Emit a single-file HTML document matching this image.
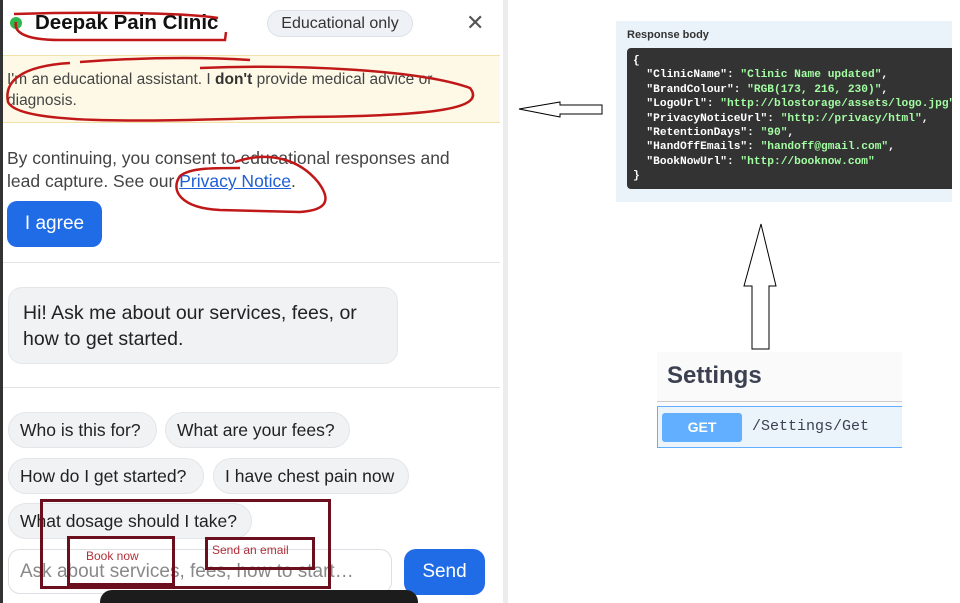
<!DOCTYPE html>
<html style="overflow:hidden;height:603px"><head><meta charset="utf-8"><style>
*{margin:0;padding:0;box-sizing:border-box}
body{width:960px;height:603px;background:#fff;font-family:"Liberation Sans",sans-serif;position:relative;overflow:hidden}
.a{position:absolute}
.chip{position:absolute;height:36px;border-radius:18px;background:#f1f2f4;border:1px solid #e3e5e8;font-size:17.5px;color:#222;line-height:34px;padding-left:11px;white-space:nowrap}
.code{font-family:"Liberation Mono",monospace;font-weight:bold;font-size:11.2px;line-height:14.4px;color:#fff;white-space:pre}
.g{color:#a2fca2}
</style></head><body>
<div class="a" style="left:0;top:0;width:3px;height:603px;background:#333"></div>
<div class="a" style="left:503px;top:0;width:5px;height:603px;background:#ececec"></div>
<div class="a" style="left:10px;top:17px;width:12px;height:12px;border-radius:6px;background:#2db84d"></div>
<div class="a" style="left:35px;top:11px;font-size:20.5px;font-weight:bold;color:#111">Deepak Pain Clinic</div>
<div class="a" style="left:267px;top:10px;width:146px;height:27px;border-radius:14px;background:#eef1f5;border:1px solid #dde2e8;font-size:16px;color:#333;text-align:center;line-height:25px">Educational only</div>
<div class="a" style="left:466px;top:10px;font-size:22px;color:#555">✕</div>
<div class="a" style="left:3px;top:55px;width:497px;height:68px;background:#fdf9e6;border-top:1px solid #f1e2a8;border-bottom:1px solid #f1e2a8"></div>
<div class="a" style="left:7px;top:69px;width:475px;font-size:15.5px;line-height:21px;color:#444">I'm an educational assistant. I <b style="color:#333">don't</b> provide medical advice or diagnosis.</div>
<div class="a" style="left:7px;top:147px;width:470px;font-size:17.5px;line-height:23px;color:#444">By continuing, you consent to educational responses and lead capture. See our <span style="color:#1d5fd6;text-decoration:underline">Privacy Notice</span>.</div>
<div class="a" style="left:7px;top:201px;width:95px;height:46px;border-radius:10px;background:#1f6ce6;color:#fff;font-size:19px;text-align:center;line-height:46px">I agree</div>
<div class="a" style="left:3px;top:262px;width:497px;height:1px;background:#e3e3e3"></div>
<div class="a" style="left:8px;top:287px;width:390px;height:77px;border-radius:14px;background:#f1f2f4;border:1px solid #e4e6e9;font-size:19.5px;line-height:26px;color:#222;padding:12px 14px">Hi! Ask me about our services, fees, or how to get started.</div>
<div class="a" style="left:3px;top:387px;width:497px;height:1px;background:#e3e3e3"></div>
<div class="chip" style="left:8px;top:412px;width:149px">Who is this for?</div>
<div class="chip" style="left:165px;top:412px;width:185px">What are your fees?</div>
<div class="chip" style="left:8px;top:458px;width:196px">How do I get started?</div>
<div class="chip" style="left:213px;top:458px;width:196px">I have chest pain now</div>
<div class="chip" style="left:8px;top:503px;width:244px">What dosage should I take?</div>
<div class="a" style="left:8px;top:549px;width:384px;height:45px;border-radius:12px;border:1px solid #dcdfe3;font-size:19px;color:#888;line-height:43px;padding-left:11px;white-space:nowrap">Ask about services, fees, how to start…</div>
<div class="a" style="left:404px;top:549px;width:81px;height:46px;border-radius:12px;background:#1f6ce6;color:#fff;font-size:19px;text-align:center;line-height:46px">Send</div>
<div class="a" style="left:100px;top:590px;width:318px;height:13px;border-radius:12px 12px 0 0;background:#1c1c1c"></div>
<div class="a" style="left:40px;top:499px;width:291px;height:90px;border:3px solid #6b0f1e"></div>
<div class="a" style="left:67px;top:536px;width:108px;height:50px;border:3px solid #6b0f1e"></div>
<div class="a" style="left:205px;top:537px;width:110px;height:33px;border:3px solid #6b0f1e"></div>
<div class="a" style="left:86px;top:549px;font-size:12px;color:#b0303a">Book now</div>
<div class="a" style="left:212px;top:543px;font-size:12px;color:#b0303a">Send an email</div>
<svg class="a" style="left:0;top:0" width="503" height="260"><g fill="none" stroke="#c01818" stroke-width="2.5">
<path d="M14 14 C80 12 180 12 218 18 M16 22 C14 30 20 40 60 40 L225 40 L226 32"/>
<path d="M80 62 C160 56 220 58 250 60 M200 68 C300 64 420 70 470 88 C486 108 440 116 300 117 C180 120 20 128 8 102 C4 82 20 66 70 63"/>
<path d="M235 162 C270 150 300 160 318 182 C330 198 330 210 300 212 L220 210 C180 208 170 190 180 176 C190 168 210 168 240 168"/>
</g></svg>
<div class="a" style="left:616px;top:21px;width:336px;height:181px;background:#ebf3fa"></div>
<div class="a" style="left:627px;top:29px;font-size:11px;font-weight:bold;color:#333">Response body</div>
<div class="a" style="left:627px;top:48px;width:325px;height:141px;background:#333;border-radius:4px 0 0 4px"></div>
<div class="a code" style="left:633px;top:54px">{
  "ClinicName": <span class="g">"Clinic Name updated"</span>,
  "BrandColour": <span class="g">"RGB(173, 216, 230)"</span>,
  "LogoUrl": <span class="g">"http://blostorage/assets/logo.jpg"</span>,
  "PrivacyNoticeUrl": <span class="g">"http://privacy/html"</span>,
  "RetentionDays": <span class="g">"90"</span>,
  "HandOffEmails": <span class="g">"handoff@gmail.com"</span>,
  "BookNowUrl": <span class="g">"http://booknow.com"</span>
}</div>
<div class="a" style="left:952px;top:0;width:8px;height:603px;background:#fff"></div>
<svg class="a" style="left:515px;top:95px" width="95" height="30"><path d="M4 14 L45 7 L45 10 L87 10 L87 19 L45 19 L45 22 Z" fill="#fff" stroke="#000" stroke-width="1"/></svg>
<svg class="a" style="left:740px;top:222px" width="40" height="130"><path d="M21 2 L36 64 L29 64 L29 127 L12 127 L12 64 L4 64 Z" fill="#fff" stroke="#000" stroke-width="1"/></svg>
<div class="a" style="left:657px;top:352px;width:245px;height:96px;background:#fafafa"></div>
<div class="a" style="left:667px;top:362px;font-size:24px;font-weight:bold;color:#3b4151">Settings</div>
<div class="a" style="left:657px;top:401px;width:245px;height:1px;background:#ccc"></div>
<div class="a" style="left:657px;top:406px;width:245px;height:42px;background:#ebf3fb;border:1px solid #61affe;border-right:none"></div>
<div class="a" style="left:662px;top:413px;width:80px;height:29px;background:#61affe;border-radius:3px;color:#fff;font-weight:bold;font-size:14px;text-align:center;line-height:29px">GET</div>
<div class="a" style="left:752px;top:418px;font-family:'Liberation Mono',monospace;font-size:15px;color:#3b4151">/Settings/Get</div>
</body></html>
